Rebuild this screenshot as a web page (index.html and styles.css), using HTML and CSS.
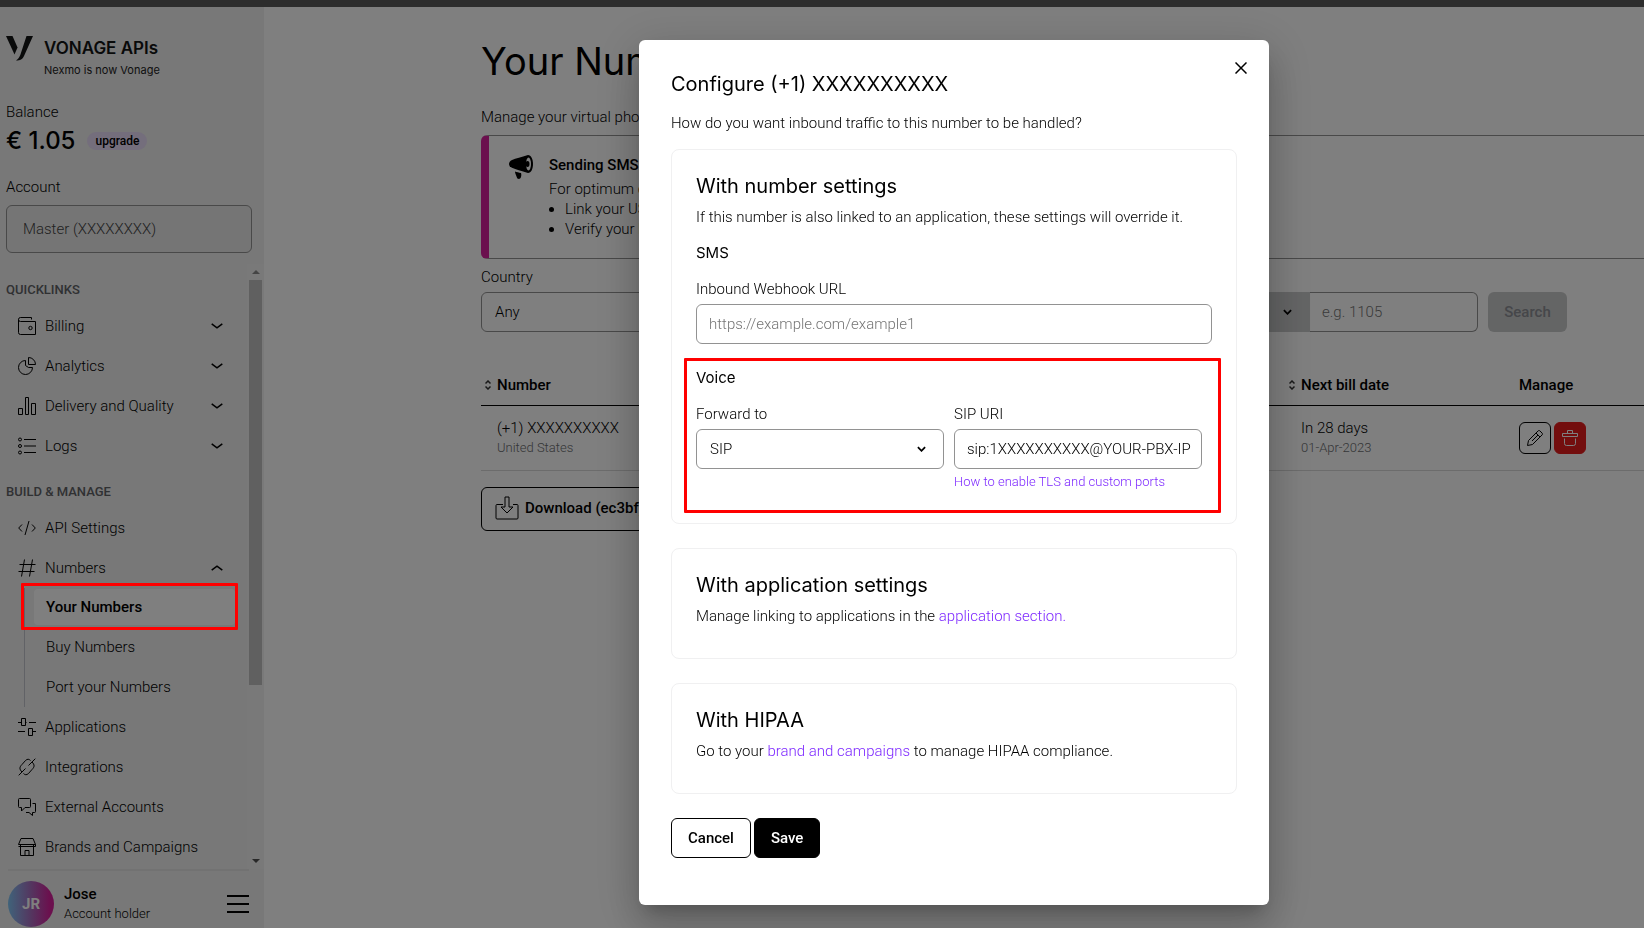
FILE: index.html
```html
<!DOCTYPE html>
<html lang="en">
<head>
<meta charset="UTF-8" />
<meta name="viewport" content="width=device-width, initial-scale=1" />
<title>Your Numbers</title>
<link rel="stylesheet" href="styles.css">
</head>
<body>

<div class="topbar"></div>

<div class="layout">
  <aside class="sidebar">
    <div class="brand">
      <svg class="brand-mark" width="28" height="25" viewBox="0 0 28 25"><path d="M0 0h6.500l5 11.500-3 7z"/><path d="M20.500 0H27L18 20c-1.800 3.600-3.500 4.500-8 4.500 2.500-1.500 3.300-3.200 4.300-5.500z"/></svg>
      <div class="brand-text">
        <strong>VONAGE APIs</strong>
        <span>Nexmo is now Vonage</span>
      </div>
    </div>

    <div class="account">
      <div class="label">Balance</div>
      <div class="balance">
        <span class="amount">€ 1.05</span>
        <a class="pill" href="#">upgrade</a>
      </div>
      <label class="label account-label" for="account">Account</label>
      <input class="account-input" id="account" type="text" value="Master (XXXXXXXX)" readonly />
    </div>

    <div class="nav-wrap">
      <nav class="nav">
        <h2>QUICKLINKS</h2>
        <a class="nav-item" href="#">
          <svg class="icon" viewBox="0 0 18 18"><path d="M.500 2.500v13a2 2 0 0 0 2 2h15v-13h-15a2 2 0 0 1 0-4h11v2"/><circle cx="12.500" cy="11" r="1.700"/></svg>
          <span>Billing</span>
          <svg class="chevron" viewBox="0 0 12 6"><path d="M.700.800 6 4.800 11.300.800"/></svg>
        </a>
        <a class="nav-item" href="#">
          <svg class="icon" viewBox="0 0 18 18"><path d="M7.500 3.500a7 7 0 1 0 7 7h-4l-3-2z"/><path d="M10.500.500v7h7a7 7 0 0 0-7-7z"/></svg>
          <span>Analytics</span>
          <svg class="chevron" viewBox="0 0 12 6"><path d="M.700.800 6 4.800 11.300.800"/></svg>
        </a>
        <a class="nav-item" href="#">
          <svg class="icon" viewBox="0 0 18 18"><path d="M.500 11.500h4v6h-4zM7.500.500h3v17h-3zM13.500 6.500h4v11h-4z"/></svg>
          <span>Delivery and Quality</span>
          <svg class="chevron" viewBox="0 0 12 6"><path d="M.700.800 6 4.800 11.300.800"/></svg>
        </a>
        <a class="nav-item" href="#">
          <svg class="icon" viewBox="0 0 18 18"><circle cx="2" cy="2.500" r="1.500"/><circle cx="2" cy="9" r="1.500"/><circle cx="2" cy="15.500" r="1.500"/><path d="M6 2.500h12M6 9h12M6 15.500h12"/></svg>
          <span>Logs</span>
          <svg class="chevron" viewBox="0 0 12 6"><path d="M.700.800 6 4.800 11.300.800"/></svg>
        </a>

        <h2>BUILD &amp; MANAGE</h2>
        <a class="nav-item" href="#">
          <svg class="icon" viewBox="0 0 18 18"><path d="M4 5.500.700 9 4 12.500M14 5.500 17.300 9 14 12.500M11 2 7 16"/></svg>
          <span>API Settings</span>
        </a>
        <a class="nav-item" href="#">
          <svg class="icon" viewBox="0 0 18 18"><path d="M6.500.500l-3 17M14.500.500l-3 17M1.500 5.500h16M.500 12.500h16"/></svg>
          <span>Numbers</span>
          <svg class="chevron" viewBox="0 0 12 6"><path d="M.700 5.200 6 1.200 11.300 5.200"/></svg>
        </a>
        <div class="subnav">
          <a class="active" href="#">Your Numbers</a>
          <a href="#">Buy Numbers</a>
          <a href="#">Port your Numbers</a>
          <div class="mark mark-nav"></div>
        </div>
        <a class="nav-item" href="#">
          <svg class="icon" viewBox="0 0 18 18"><path d="M0 4.500h3.500M7.500 4.500h1M11 4.500h7M3.500.500h4v7h-4zM0 13.500h7M10.500 10.500h4v7h-4zM14.500 13.500H18"/></svg>
          <span>Applications</span>
        </a>
        <a class="nav-item" href="#">
          <svg class="icon" viewBox="0 0 18 18"><path d="M.700 17.300 7.500 10.500M4 14C1 11 1.500 9 4 6.500l3.500-4C9.500.700 11 1 12.500 2.500M17.300.700 10.500 7.500M14 4c3 3 2.500 5 0 7.500l-3.500 4c-2 1.800-3.500 1.500-5 0"/></svg>
          <span>Integrations</span>
        </a>
        <a class="nav-item" href="#">
          <svg class="icon" viewBox="0 0 18 18"><path d="M1.500.500h10a1 1 0 0 1 1 1v7a1 1 0 0 1-1 1H7L3.500 13V9.500h-2a1 1 0 0 1-1-1v-7a1 1 0 0 1 1-1z"/><path d="M14.500 5.500h3v8a1 1 0 0 1-1 1h-2v3l-3.500-3H8"/></svg>
          <span>External Accounts</span>
        </a>
        <a class="nav-item" href="#">
          <svg class="icon" viewBox="0 0 18 18"><path d="M3 .500h12l2.500 6H.500zM2.500 6.500v11h13v-11M7 17.500v-5h4v5M.500 8.500h17v-2"/></svg>
          <span>Brands and Campaigns</span>
        </a>
      </nav>
      <div class="scrollbar">
        <svg class="arrow" viewBox="0 0 8 4"><path d="M0 4 4 0l4 4z"/></svg>
        <div class="track"><div class="thumb"></div></div>
        <svg class="arrow arrow-down" viewBox="0 0 8 4"><path d="M0 0h8L4 4z"/></svg>
      </div>
    </div>

    <div class="profile">
      <div class="avatar">JR</div>
      <div class="who">
        <strong>Jose</strong>
        <span>Account holder</span>
      </div>
      <button class="menu" aria-label="Menu"><svg width="22" height="18" viewBox="0 0 22 18"><path d="M0 1h22M0 9h22M0 17h22"/></svg></button>
    </div>
  </aside>

  <main class="main">
    <h1>Your Numbers</h1>
    <p class="lead">Manage your virtual phone numbers</p>

    <section class="callout">
      <svg class="horn" width="24" height="24" viewBox="0 0 24 24"><path d="M19 0C12 2 7 3.500 3 5 1 6 0 7.500 0 9s1 3 3 3.800c4 1.600 9 3.200 16 5.200 3 0 5-4 5-9s-2-9-5-9z"/><path d="M6 16.500c1.500.500 4 1.200 6 1.500 1 3-.500 6-2 6s-2-.800-2.500-2.500C7 19.500 6 18.500 6 16.500z"/><ellipse cx="19.500" cy="9" rx="2.500" ry="6.500" class="horn-hole"/><ellipse cx="18.500" cy="9" rx="2" ry="3"/></svg>
      <div>
        <h3>Sending SMS to US numbers</h3>
        <p>For optimum delivery</p>
        <ul>
          <li>Link your US number</li>
          <li>Verify your brand</li>
        </ul>
      </div>
    </section>

    <form class="filters">
      <div class="filter">
        <label class="label" for="country">Country</label>
        <select id="country" class="control"><option>Any</option></select>
      </div>
      <div class="match">
        <div class="match-type">
          <select aria-label="Match"><option></option></select>
          <svg class="caret" viewBox="0 0 10 6"><path d="M1 1l4 4 4-4"/></svg>
        </div>
        <input type="text" aria-label="Number" placeholder="e.g. 1105" />
      </div>
      <button class="search" type="button" disabled>Search</button>
    </form>

    <table class="numbers">
      <thead>
        <tr>
          <th><svg class="sort" viewBox="0 0 6 10"><path d="M.500 3.500 3 1l2.500 2.500M.500 6.500 3 9l2.500-2.500"/></svg>Number</th>
          <th class="col-date"><svg class="sort" viewBox="0 0 6 10"><path d="M.500 3.500 3 1l2.500 2.500M.500 6.500 3 9l2.500-2.500"/></svg>Next bill date</th>
          <th class="col-manage">Manage</th>
        </tr>
      </thead>
      <tbody>
        <tr>
          <td>(+1) XXXXXXXXXX<small>United States</small></td>
          <td>In 28 days<small>01-Apr-2023</small></td>
          <td class="col-manage">
            <div class="actions">
              <button class="edit" aria-label="Edit"><svg width="16" height="16" viewBox="0 0 16 16"><path d="M.500 15.500l1-5L11 1c.700-.700 1.300-.700 2 0l2 2c.700.700.700 1.300 0 2l-9.500 9.500zM9 3l4 4M11 5 5 11"/></svg></button>
              <button class="delete" aria-label="Delete"><svg width="16" height="16" viewBox="0 0 16 16"><path d="M.500 3.500h15v3H.500zM5.500 3.500v-3h5v3M2.500 8.500v5a2 2 0 0 0 2 2h7a2 2 0 0 0 2-2v-5"/></svg></button>
            </div>
          </td>
        </tr>
      </tbody>
    </table>

    <button class="download">
      <svg width="24" height="24" viewBox="0 0 24 24"><path d="M8 8.500H2a1 1 0 0 0-1 1V22a1 1 0 0 0 1 1h20a1 1 0 0 0 1-1V9.500a1 1 0 0 0-1-1h-4M10 1h4v10h4l-6 6-6-6h4z"/></svg>
      Download (ec3bf)
    </button>
  </main>
</div>

<div class="overlay">
  <div class="modal" role="dialog" aria-modal="true" aria-labelledby="modal-title">
    <button class="close" aria-label="Close"><svg width="12" height="12" viewBox="0 0 12 12"><path d="M.500.500l11 11M11.500.500l-11 11"/></svg></button>
    <h2 class="modal-title" id="modal-title">Configure (+1) XXXXXXXXXX</h2>
    <p class="modal-lead">How do you want inbound traffic to this number to be handled?</p>

    <section class="card">
      <h3>With number settings</h3>
      <p>If this number is also linked to an application, these settings will override it.</p>
      <h4>SMS</h4>
      <label for="webhook">Inbound Webhook URL</label>
      <input class="control" id="webhook" type="text" placeholder="https://example.com/example1" />
      <div class="voice">
        <h4>Voice</h4>
        <div class="fields">
          <div class="field">
            <label for="forward">Forward to</label>
            <div class="select">
              <select class="control" id="forward"><option>SIP</option></select>
              <svg class="caret" viewBox="0 0 10 6"><path d="M1 1l4 4 4-4"/></svg>
            </div>
          </div>
          <div class="field">
            <label for="sip">SIP URI</label>
            <input class="control" id="sip" type="text" value="sip:1XXXXXXXXXX@YOUR-PBX-IP" />
            <a class="hint" href="#">How to enable TLS and custom ports</a>
          </div>
        </div>
        <div class="mark mark-voice"></div>
      </div>
    </section>

    <section class="card">
      <h3>With application settings</h3>
      <p>Manage linking to applications in the <a href="#">application section.</a></p>
    </section>

    <section class="card">
      <h3>With HIPAA</h3>
      <p>Go to your <a href="#">brand and campaigns</a> to manage HIPAA compliance.</p>
    </section>

    <div class="buttons">
      <button class="cancel">Cancel</button>
      <button class="save">Save</button>
    </div>
  </div>
</div>

</body>
</html>
```
FILE: styles.css
```css
* {
  box-sizing: border-box;
}
body {
  margin: 0;
  height: 100vh;
  overflow: hidden;
  display: flex;
  flex-direction: column;
  background: #fff;
  font-family: Roboto, 'Liberation Sans', sans-serif;
  font-size: 15px;
  font-weight: 300;
  line-height: 24px;
  color: #000;
}
h1, h2, h3, h4, p, ul {
  margin: 0;
}
button, input, select {
  font: inherit;
  color: inherit;
}
a {
  color: inherit;
  text-decoration: none;
}
svg {
  fill: none;
  stroke: #000;
  flex: none;
}
select {
  appearance: none;
}
.topbar {
  height: 7px;
  background: #5a5a5a;
  flex: none;
}
.layout {
  display: flex;
  flex: 1;
  min-height: 0;
}

/* sidebar */
.sidebar {
  width: 264px;
  flex: none;
  display: flex;
  flex-direction: column;
  background: #f0f0f0;
}
.brand {
  display: flex;
  gap: 10px;
  padding: 29px 6px 0;
}
.brand-mark {
  fill: #131415;
  stroke: none;
}
.brand-text {
  display: flex;
  flex-direction: column;
}
.brand-text strong {
  font-family: Inter, sans-serif;
  font-size: 17px;
  font-weight: 600;
  color: #131415;
}
.brand-text span {
  font-family: Inter, sans-serif;
  font-size: 11px;
  font-weight: 400;
  line-height: 20px;
  color: #222;
}
.account {
  padding: 20px 12px 0 6px;
}
.balance {
  display: flex;
  align-items: center;
  gap: 12px;
  height: 34px;
}
.amount {
  font-family: Inter, sans-serif;
  font-size: 24px;
  font-weight: 500;
}
.pill {
  padding: 0 8px;
  border-radius: 9px;
  background: #e8dcf8;
  font-size: 12px;
  font-weight: 500;
  line-height: 18px;
}
.account-label {
  display: block;
  margin-top: 17px;
}
.account-input {
  display: block;
  width: 100%;
  height: 48px;
  margin-top: 6px;
  padding: 0 16px;
  border: 1px solid #929292;
  border-radius: 6px;
  background: #ebebeb;
  color: #444;
}
.nav-wrap {
  flex: 1;
  display: flex;
  min-height: 0;
  margin-top: 11px;
}
.nav {
  flex: 1;
}
.nav h2 {
  height: 42px;
  padding: 14px 6px 0;
  font-size: 13px;
  font-weight: 500;
  color: #616266;
}
.nav-item {
  display: flex;
  align-items: center;
  height: 40px;
  padding: 0 24px 0 18px;
}
.nav-item span {
  flex: 1;
  padding-left: 9px;
}
.icon {
  width: 18px;
  height: 18px;
}
.chevron {
  width: 12px;
  height: 6px;
  stroke-width: 1.5;
}
.subnav {
  position: relative;
  display: flex;
  flex-direction: column;
  gap: 4px;
  margin-left: 24px;
  padding: 1px 12px 2px 9px;
  border-left: 1px solid #c2c4cc;
}
.subnav a {
  display: flex;
  align-items: center;
  height: 36px;
  padding-left: 12px;
  border-radius: 4px;
}
.subnav .active {
  background: #fff;
  font-weight: 500;
}
.mark {
  position: absolute;
  z-index: 20;
  border: 3px solid #f00;
  border-radius: 1px;
  pointer-events: none;
}
.mark-nav {
  inset: -5px 9px auto -4px;
  height: 47px;
}
.scrollbar {
  width: 17px;
  padding: 6px 2px;
  display: flex;
  flex-direction: column;
  align-items: center;
  background: #f3f3f3;
}
.arrow {
  width: 8px;
  height: 4px;
  fill: #8a8a8a;
  stroke: none;
}
.arrow-down {
  fill: #505050;
}
.track {
  flex: 1;
  width: 13px;
  padding-top: 6px;
}
.thumb {
  height: 70%;
  background: #c1c1c1;
}
.profile {
  display: flex;
  align-items: center;
  height: 59px;
  margin: 0 15px 0 8px;
  padding-top: 9px;
  border-top: 2px solid #e4e4e4;
}
.avatar {
  width: 46px;
  height: 46px;
  border-radius: 50%;
  background: linear-gradient(90deg, #80c7f5, #a86cc0 50%, #d6219c 90%);
  color: #fff;
  font-size: 15px;
  font-weight: 700;
  line-height: 46px;
  text-align: center;
}
.who {
  flex: 1;
  display: flex;
  flex-direction: column;
  padding-left: 10px;
  line-height: 19px;
}
.who strong {
  font-weight: 500;
}
.who span {
  font-size: 13px;
}
.menu {
  display: flex;
  padding: 0;
  border: 0;
  background: none;
}
.menu svg {
  stroke-width: 2;
}

/* page behind the dialog */
.main {
  flex: 1;
  min-width: 0;
  padding: 30px 0 0 217px;
}
.main h1 {
  font-family: Inter, sans-serif;
  font-size: 38px;
  font-weight: 400;
  line-height: 48px;
}
.lead {
  margin: 20px 0 6px;
}
.callout {
  display: flex;
  gap: 16px;
  height: 124px;
  padding: 19px 20px;
  border: 1px solid #929292;
  border-left: 8px solid #d6219c;
  border-right: 0;
  border-radius: 6px 0 0 6px;
  line-height: 20px;
}
.callout svg {
  fill: #000;
  stroke: none;
}
.callout .horn-hole {
  fill: #fff;
}
.callout h3 {
  font-size: 15px;
  font-weight: 500;
  line-height: 20px;
}
.callout p {
  margin-top: 4px;
}
.callout ul {
  padding-left: 16px;
}
.filters {
  display: flex;
  align-items: flex-end;
  gap: 10px;
  padding: 6px 77px 0 0;
}
.filter {
  flex: 1;
}
.filter .label {
  display: block;
  margin-bottom: 3px;
}
.control {
  display: block;
  width: 100%;
  height: 40px;
  padding: 0 0 0 12px;
  border: 1px solid #929292;
  border-radius: 6px;
  background: #fff;
}
select.control {
  padding: 0 13px;
}
.match {
  display: flex;
}
.match-type {
  position: relative;
}
.match select {
  width: 90px;
  height: 40px;
  border: 0;
  background: #c9cacb;
}
.match input {
  width: 168px;
  height: 40px;
  padding: 0 12px;
  border: 1px solid #929292;
  border-left: 0;
  border-radius: 0 6px 6px 0;
}
.caret {
  position: absolute;
  top: 17px;
  right: 18px;
  width: 9px;
  height: 6px;
  stroke-width: 2;
  pointer-events: none;
}
::placeholder {
  color: #757575;
  opacity: 1;
}
.search {
  width: 79px;
  height: 40px;
  border: 0;
  border-radius: 6px;
  background: #c9cacb;
  color: #8c8e94;
  font-weight: 500;
}
.numbers {
  width: 100%;
  margin-top: 32px;
  border-collapse: collapse;
}
.numbers th {
  height: 41px;
  padding: 2px 0 0 4px;
  border-bottom: 1px solid #000;
  font-weight: 500;
  text-align: left;
}
.numbers td {
  height: 65px;
  padding: 0 0 0 16px;
  border-bottom: 1px solid #d8d8d8;
  line-height: 20px;
}
.numbers small {
  display: block;
  font-size: 13px;
  color: #6b6d70;
}
.numbers .col-date {
  width: 234px;
}
.numbers .col-manage {
  width: 125px;
  padding-left: 0;
}
.sort {
  width: 6px;
  height: 10px;
  margin-right: 6px;
  stroke: #333;
  stroke-width: 1.5;
}
.actions {
  display: flex;
  gap: 3px;
}
.actions button {
  display: flex;
  align-items: center;
  justify-content: center;
  width: 32px;
  height: 32px;
  padding: 0;
  border: 1px solid #000;
  border-radius: 6px;
  background: #fff;
}
.actions .delete {
  border-color: #e61d1d;
  background: #e61d1d;
}
.delete svg {
  stroke: #fff;
}
.download {
  display: flex;
  align-items: center;
  gap: 6px;
  width: 240px;
  height: 44px;
  margin-top: 16px;
  padding: 0 13px 2px;
  border: 1px solid #000;
  border-radius: 6px;
  background: #fff;
  font-weight: 500;
}

/* dialog */
.overlay {
  position: fixed;
  inset: 0;
  z-index: 10;
  padding: 40px 0 0 264px;
  background: rgba(0, 0, 0, 0.5);
}
.modal {
  position: relative;
  width: 630px;
  max-width: 95%;
  margin: 0 auto;
  padding: 32px 32px 47px;
  border-radius: 6px;
  background: #fff;
  box-shadow:
    0 11px 15px -7px rgba(0, 0, 0, 0.2),
    0 24px 38px 3px rgba(0, 0, 0, 0.14),
    0 9px 46px 8px rgba(0, 0, 0, 0.12);
}
.close {
  position: absolute;
  top: 16px;
  right: 16px;
  display: flex;
  padding: 6px;
  border: 0;
  background: none;
}
.close svg {
  stroke-width: 1.5;
}
.modal-title, .card h3 {
  font-family: Inter, sans-serif;
  font-size: 20px;
  font-weight: 400;
}
.modal-lead {
  margin: 15px 0 14px;
}
.card {
  margin-bottom: 24px;
  padding: 24px 24px 30px;
  border: 1px solid #f0f0f1;
  border-radius: 8px;
}
.card p {
  margin-top: 7px;
}
.card h4 {
  margin: 12px 0;
  font-family: Inter, sans-serif;
  font-size: 15px;
  font-weight: 400;
}
.card label {
  display: block;
  margin-bottom: 3px;
}
.card a {
  color: #7d28ff;
}
.voice {
  position: relative;
  margin-top: 22px;
  padding-bottom: 1px;
}
.fields {
  display: flex;
  gap: 10px;
  padding-right: 10px;
}
.field {
  flex: 1;
}
.select {
  position: relative;
}
.card .hint {
  display: block;
  padding-top: 3px;
  font-size: 13px;
  line-height: 20px;
}
.mark-voice {
  inset: -8px -9px -20px -12px;
}
.buttons {
  display: flex;
  gap: 3px;
}
.buttons button {
  height: 40px;
  padding: 0 16px;
  border: 1px solid #000;
  border-radius: 6px;
  background: #fff;
  font-weight: 500;
}
.buttons .save {
  background: #000;
  color: #fff;
}
```
